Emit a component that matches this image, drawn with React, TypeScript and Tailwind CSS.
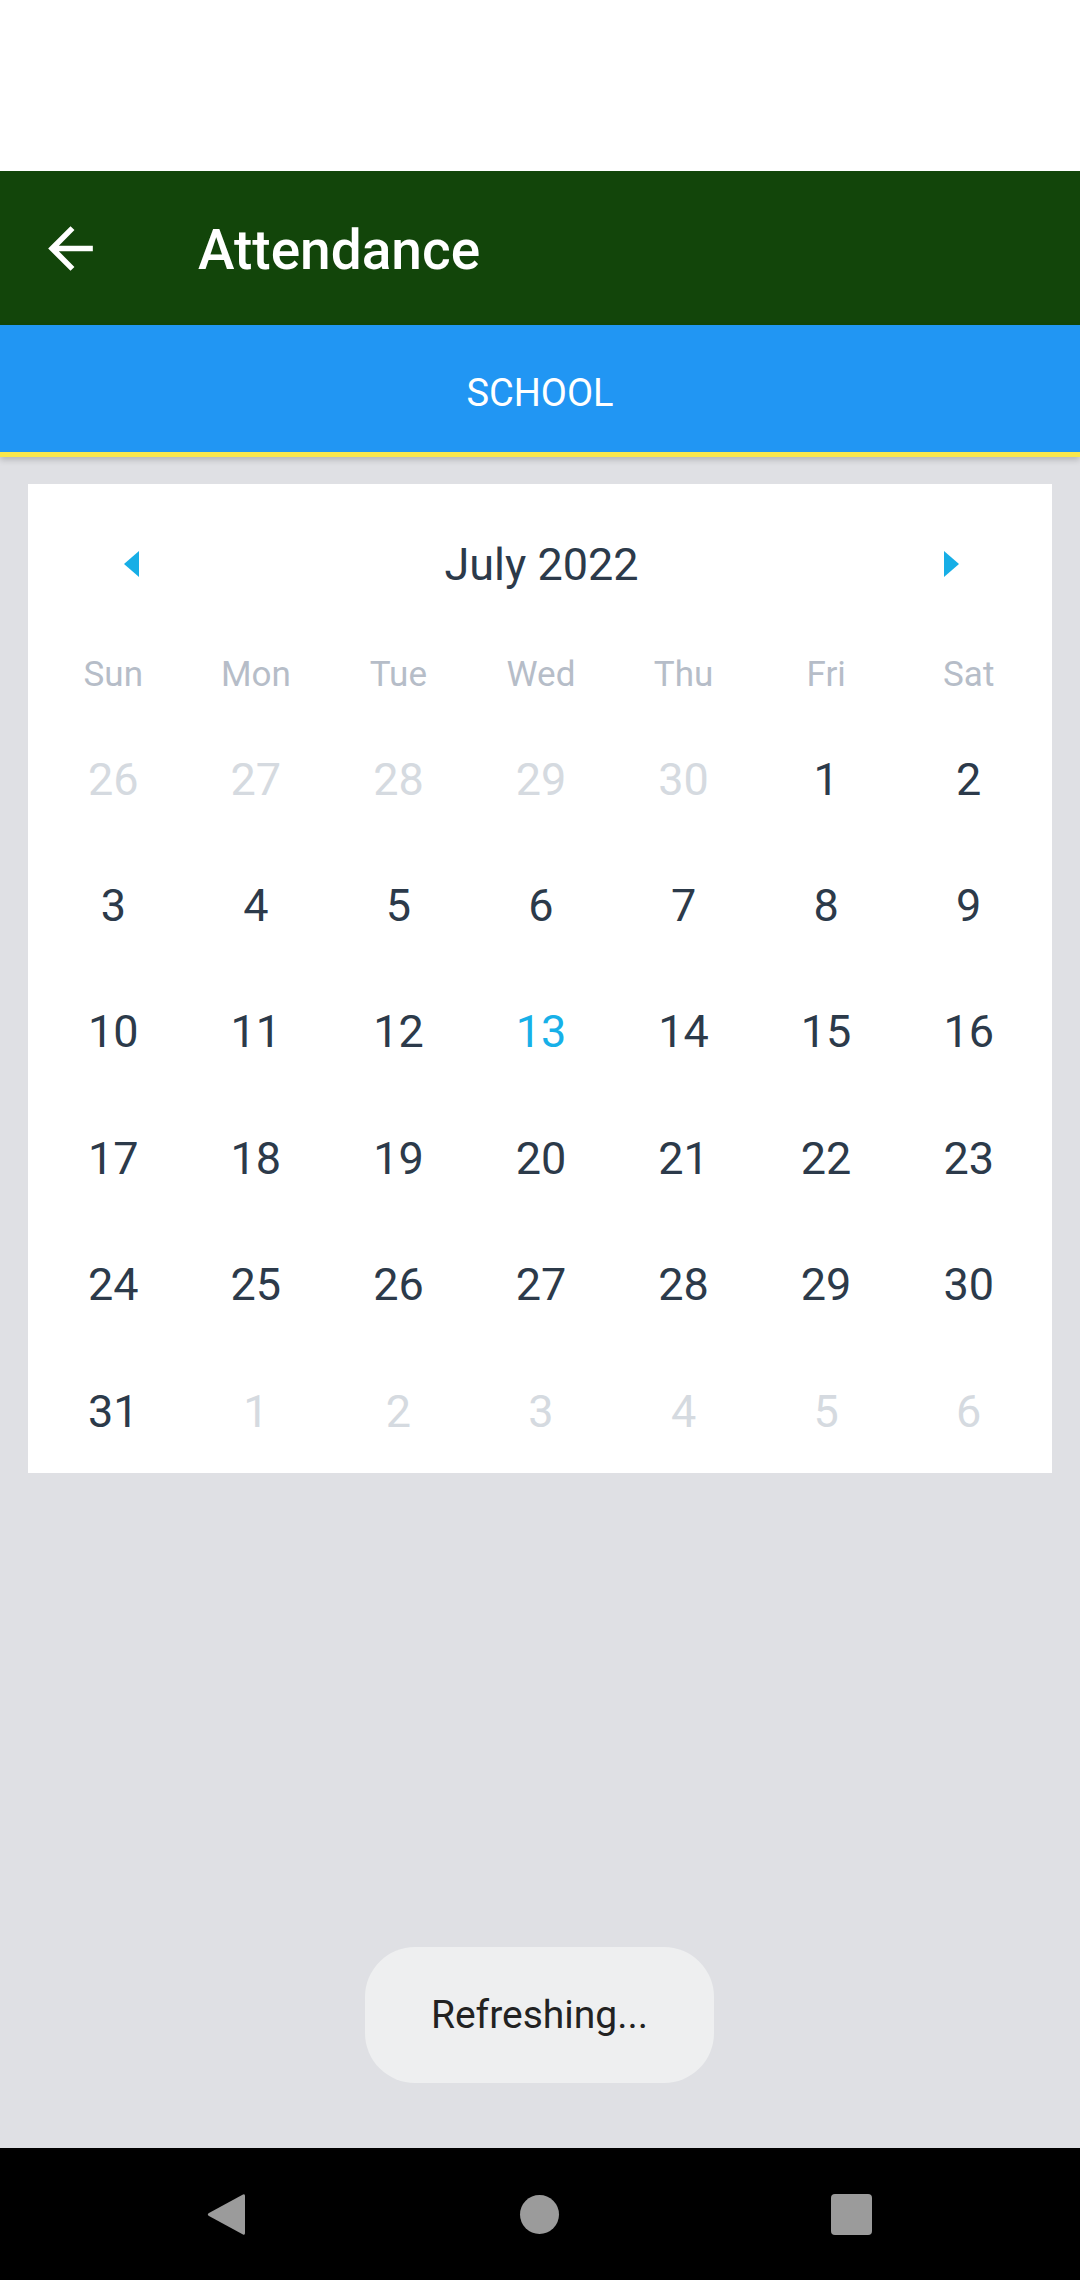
import React from 'react';

type Day = { n: number; muted?: boolean; today?: boolean };

const weekDays = ['Sun', 'Mon', 'Tue', 'Wed', 'Thu', 'Fri', 'Sat'];

const buildDays = (): Day[] => {
    const list: Day[] = [];
    for (let i = 26; i <= 30; i++) list.push({ n: i, muted: true });
    for (let i = 1; i <= 31; i++) list.push({ n: i, today: i === 13 });
    for (let i = 1; i <= 6; i++) list.push({ n: i, muted: true });
    return list;
};

const BackArrow: React.FC = () => (
    <svg width="67" height="67" viewBox="0 0 24 24" fill="#ffffff">
        <path d="M20 11H7.83l5.59-5.59L12 4l-8 8 8 8 1.41-1.41L7.83 13H20v-2z" />
    </svg>
);

const Caret: React.FC<{ dir: 'left' | 'right' }> = ({ dir }) => (
    <svg width="15" height="26" viewBox="0 0 15 26">
        {dir === 'left'
            ? <polygon points="15,0 15,26 0,13" fill="#17aee6" />
            : <polygon points="0,0 0,26 15,13" fill="#17aee6" />}
    </svg>
);

const Calendar: React.FC = () => {
    const days = buildDays();
    return (
        <div className="bg-white h-[989px] pt-[40px]">
            <div className="flex items-center justify-between h-[80px] pl-[96px] pr-[93px]">
                <Caret dir="left" />
                <span className="text-[45px] leading-none text-[#2c3a4a]">July 2022</span>
                <Caret dir="right" />
            </div>
            <div className="grid grid-cols-7 pl-[14px] pr-[12px] mt-[28px] h-[84px] items-center">
                {weekDays.map(w => (
                    <div key={w} className="text-center text-[35px] leading-none text-[#b6bdc8]">{w}</div>
                ))}
            </div>
            <div className="grid grid-cols-7 pl-[14px] pr-[12px]">
                {days.map((d, i) => (
                    <div
                        key={i}
                        className={
                            'h-[126.4px] flex items-center justify-center text-[45px] leading-none ' +
                            (d.muted ? 'text-[#d5dae0]' : d.today ? 'text-[#17b0e8]' : 'text-[#2c3a4a]')
                        }
                    >
                        {d.n}
                    </div>
                ))}
            </div>
        </div>
    );
};

export default function App() {
    return (
        <div className="relative flex flex-col h-[2280px] w-[1080px] font-['Roboto','Liberation_Sans',sans-serif]">
            <div className="h-[171px] bg-white" />
            <div className="h-[154px] bg-[#12450a] flex items-center pt-[4px]">
                <div className="ml-[37px] -mt-[4px]">
                    <BackArrow />
                </div>
                <h1 className="ml-[94px] text-[55px] leading-none font-medium text-white">Attendance</h1>
            </div>
            <div className="z-10 shadow-[0_3px_6px_rgba(0,0,0,0.18)]">
                <div className="h-[127px] bg-[#2196f3] flex items-center justify-center pt-[8px]">
                    <span className="text-[38px] leading-none text-white">SCHOOL</span>
                </div>
                <div className="h-[5px] bg-[#fbe74c]" />
            </div>
            <main className="flex-1 bg-[#dfe0e4] px-[28px] pt-[27px]">
                <Calendar />
            </main>
            <nav className="h-[132px] bg-black flex items-center">
                <svg className="ml-[205px]" width="41" height="45" viewBox="0 0 41 45">
                    <path d="M38 2.5 Q40 1.5 40 4 L40 41 Q40 43.5 38 42.5 L3.5 23.8 Q2 22.5 3.5 21.2 Z" fill="#9b9b9b" />
                </svg>
                <div className="ml-[274px] w-[39px] h-[39px] rounded-full bg-[#9b9b9b]" />
                <div className="ml-[272px] w-[41px] h-[41px] rounded-[4px] bg-[#9b9b9b]" />
            </nav>
            <div className="absolute left-[365px] top-[1947px] w-[349px] h-[136px] rounded-[50px] bg-[#eeeff0] flex items-center justify-center">
                <span className="text-[39px] leading-none text-[#222222]">Refreshing...</span>
            </div>
        </div>
    );
}
